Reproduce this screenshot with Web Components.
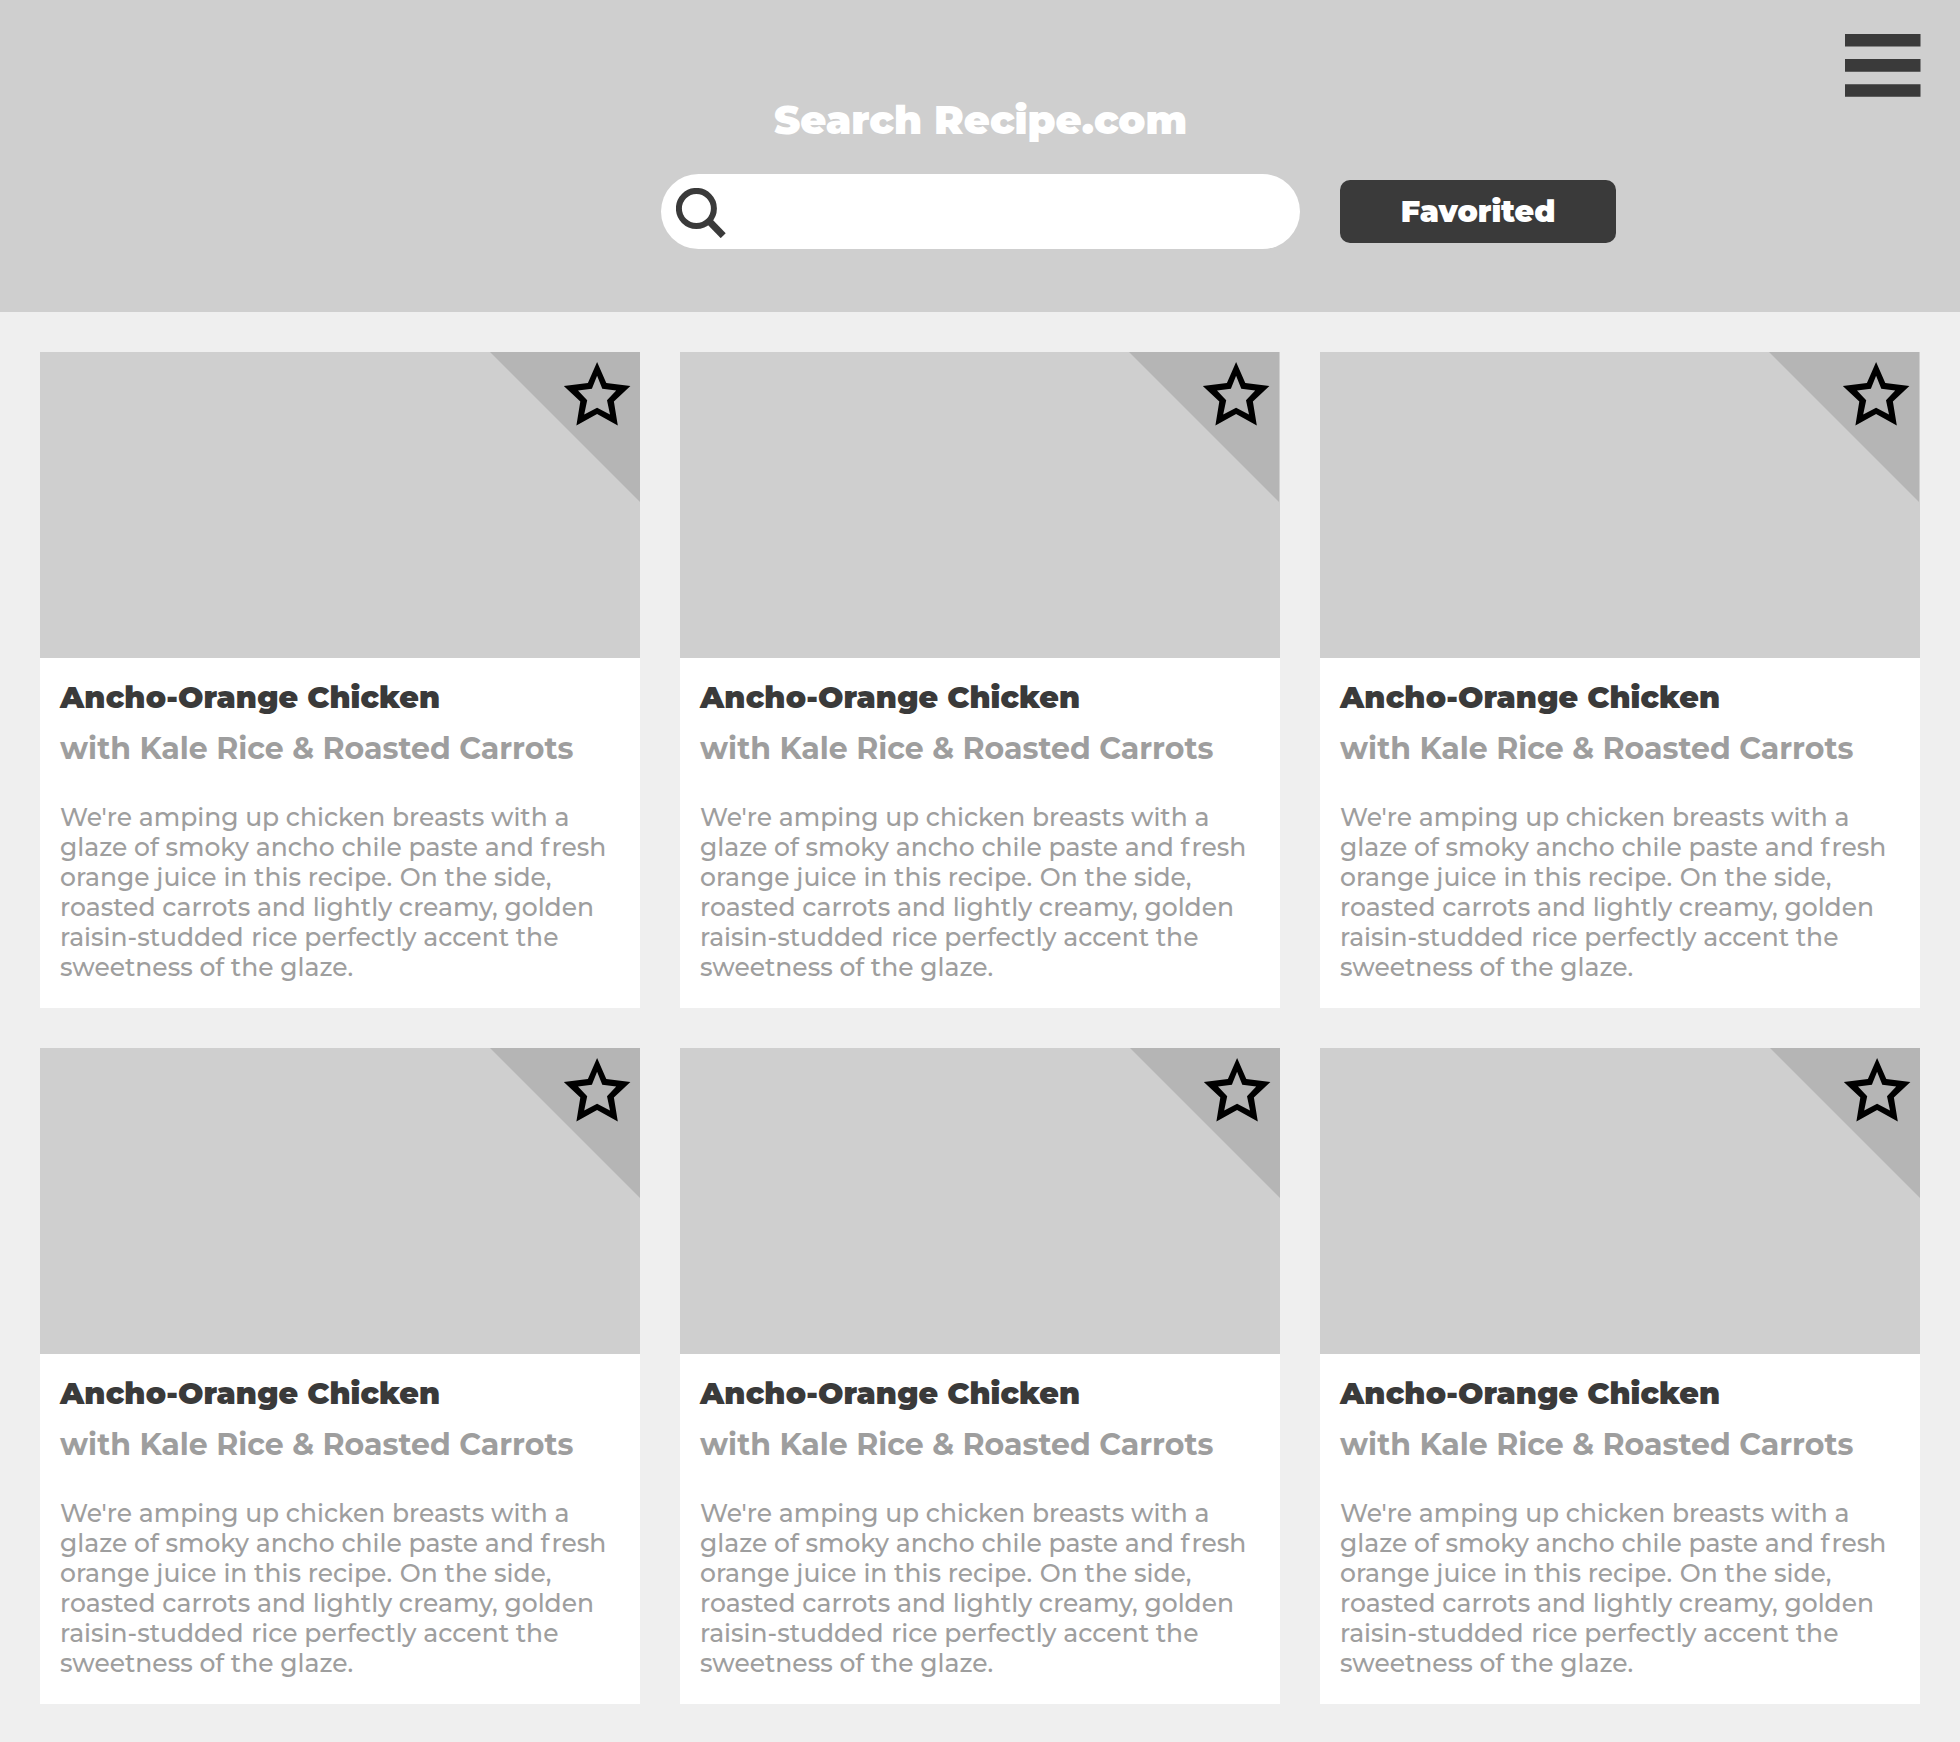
<!DOCTYPE html>
<html lang="en">
<head>
<meta charset="utf-8">
<title>Search Recipe.com</title>
<style>
  body { margin: 0; background: #efefef; font-family: Montserrat, Inter, sans-serif; }
</style>
</head>
<body>
<recipe-page></recipe-page>
<script>
class MenuButton extends HTMLElement {
  constructor() {
    super();
    this.attachShadow({ mode: 'open' }).innerHTML = `
      <style>:host { display: block; width: 76px; height: 63px; } svg { display: block; }</style>
      <svg width="76" height="63" viewBox="0 0 76 63" fill="#3a3a3a">
        <path d="M0 0H75.5V12.6H0ZM0 25.1H75.5V37.7H0ZM0 50.2H75.5V62.8H0Z"/>
      </svg>`;
  }
}
customElements.define('menu-button', MenuButton);

class SearchBox extends HTMLElement {
  constructor() {
    super();
    this.attachShadow({ mode: 'open' }).innerHTML = `
      <style>
        :host { display: flex; box-sizing: border-box; width: 639px; height: 75px; border-radius: 37.5px; background: #fff; padding: 14px 0 0 15px; }
        svg { display: block; }
      </style>
      <svg width="50" height="50" viewBox="0 0 50 50" fill="none" stroke="#3a3a3a">
        <circle cx="20.4" cy="20.4" r="17.5" stroke-width="6"/>
        <path d="M32 32L47.2 47.7" stroke-width="7"/>
      </svg>`;
  }
}
customElements.define('search-box', SearchBox);

class FavoritedButton extends HTMLElement {
  constructor() {
    super();
    this.attachShadow({ mode: 'open' }).innerHTML = `
      <style>
        :host { display: flex; justify-content: center; width: 276px; height: 63px; border-radius: 10px; background: #3a3a3a; color: #fff; font-weight: 900; font-size: 30px; line-height: 64px; }
      </style>
      <span>Favorited</span>`;
  }
}
customElements.define('favorited-button', FavoritedButton);

class SiteHeader extends HTMLElement {
  constructor() {
    super();
    this.attachShadow({ mode: 'open' }).innerHTML = `
      <style>
        :host { display: grid; grid-template-columns: 1fr 639px 1fr; box-sizing: border-box; height: 312px; background: #cfcfcf; padding-left: 1px; grid-template-rows: 174px 75px; }
        h1 { margin: 0; grid-column: 2; grid-row: 1; display: flex; justify-content: center; padding-top: 95px; color: #fff; font-weight: 900; font-size: 40px; line-height: 50px; }
        menu-button { grid-column: 3; grid-row: 1; justify-self: end; margin: 34px 39px 0 0; }
        search-box { grid-column: 2; grid-row: 2; }
        favorited-button { grid-column: 3; grid-row: 2; margin: 6px 0 0 40px; }
      </style>
      <h1>Search Recipe.com</h1>
      <menu-button></menu-button>
      <search-box></search-box>
      <favorited-button></favorited-button>`;
  }
}
customElements.define('site-header', SiteHeader);

class RecipeCard extends HTMLElement {
  constructor() {
    super();
    this.attachShadow({ mode: 'open' }).innerHTML = `
      <style>
        :host { display: block; height: 656px; background: #fff; }
        .photo { display: flex; justify-content: flex-end; height: 306px; background: #cfcfcf; }
        svg { display: block; margin-right: var(--corner-inset, 0); }
        .info { padding: 22px 20px 0; }
        h2, h3, p { margin: 0; }
        h2, h3 { font-size: 30px; line-height: 36px; }
        h2 { color: #3a3a3a; font-weight: 900; letter-spacing: 0.07px; }
        h3 { color: #9e9e9e; font-weight: 700; margin-top: 15px; }
        p { color: #9e9e9e; font-weight: 500; font-size: 25px; line-height: 30px; padding: 35px 0 0; }
      </style>
      <div class="photo">
        <svg width="150" height="150" viewBox="0 0 150 150">
          <path d="M0 0H150V150Z" fill="#b5b5b5"/>
          <path fill-rule="evenodd" d="M107.1 10L116.3 31L140.4 34.1L123.9 49.6L127.8 73.5L107.1 62L86.4 73.5L90.3 49.6L73.8 34.1L97.9 31ZM107.1 23.8L112.3 36.7L126.2 38.5L117 48.3L120 62.6L107.1 55.7L94.2 62.6L97.2 48.3L88 38.5L101.9 36.7Z"/>
        </svg>
      </div>
      <div class="info">
        <h2><slot name="title"></slot></h2>
        <h3><slot name="subtitle"></slot></h3>
        <p><slot></slot></p>
      </div>`;
  }
}
customElements.define('recipe-card', RecipeCard);

const recipe = `<span slot="title">Ancho-Orange Chicken</span><span slot="subtitle">with Kale Rice &amp; Roasted Carrots</span>We're amping up chicken breasts with a<br>glaze of smoky ancho chile paste and <span class="loose">f</span>resh<br>orange juice in this recipe.<span class="nudge"> </span>On the side,<br>roasted carrots and lightly creamy, golden<br>raisin-studded<span class="nudge"> </span>rice perfectly accent the<br>sweetness of the glaze.`;

class RecipePage extends HTMLElement {
  constructor() {
    super();
    this.attachShadow({ mode: 'open' }).innerHTML = `
      <style>
        :host { display: block; width: 1960px; height: 1742px; overflow: hidden; }
        main { display: grid; grid-template-columns: repeat(3, 600px); gap: 40px; padding: 40px; }
        .inset { --corner-inset: 1px; }
        .loose { letter-spacing: 2px; }
        .nudge { letter-spacing: 1px; }
      </style>
      <site-header></site-header>
      <main>
        ${['', 'inset', 'inset', '', '', ''].map(c => `<recipe-card class="${c}">${recipe}</recipe-card>`).join('')}
      </main>`;
  }
}
customElements.define('recipe-page', RecipePage);
</script>
</body>
</html>
